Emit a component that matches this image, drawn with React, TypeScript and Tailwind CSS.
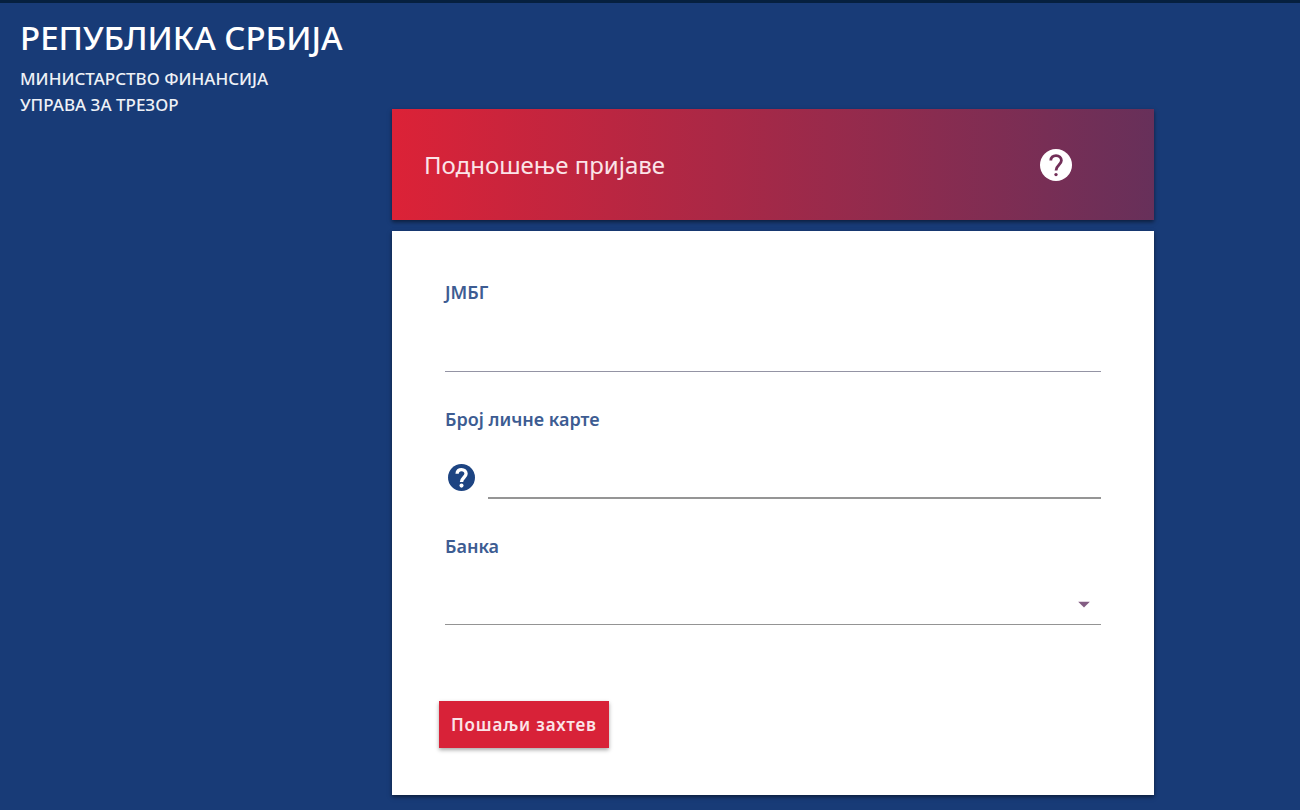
import type { ReactNode } from "react";
import { MdArrowDropDown } from "react-icons/md";

// Round help badge; the disc takes the text colour, the mark its own stroke.
function HelpIcon({ size, stroke, weight }: { size: number; stroke: string; weight: number }) {
  return (
    <svg width={size} height={size} viewBox="0 0 32 32" fill="none" aria-hidden="true">
      <circle cx="16" cy="16" r="16" fill="currentColor" />
      <path
        d="M10.8 11.5C10.8 8.3 13 6.6 16 6.6C19.2 6.6 21.4 8.6 21.4 11.6C21.4 15.8 16 16.4 16 21.4"
        stroke={stroke}
        strokeWidth={weight}
      />
      <circle cx="16" cy="25.6" r={weight * 0.6} fill={stroke} />
    </svg>
  );
}

function Field({ id, label, children }: { id: string; label: string; children: ReactNode }) {
  return (
    <div className="flex flex-col">
      <label htmlFor={id} className="text-lg leading-6 font-semibold text-[#3d5c92]">
        {label}
      </label>
      <div className="mt-8 flex items-end">{children}</div>
    </div>
  );
}

export default function App() {
  return (
    <div className="flex min-h-screen items-start border-t-3 border-[#06203f] bg-[#183b77] pb-[15px] font-['Noto_Sans','Open_Sans',sans-serif]">
      <header className="w-[392px] shrink-0 pt-[14px] pl-5 text-white">
        <h1 className="text-[33px] leading-[42px] font-medium">РЕПУБЛИКА СРБИЈА</h1>
        <p className="mt-[7px] text-[17px] leading-[26px] font-medium text-[#eef1f6]">
          МИНИСТАРСТВО ФИНАНСИЈА
          <br />
          УПРАВА ЗА ТРЕЗОР
        </p>
      </header>

      <main className="mt-[106px] mr-[146px] min-w-0 flex-1">
        <div className="flex h-[111px] items-center justify-between bg-linear-to-r/srgb from-[#dc2237] to-[#67305a] pr-[82px] pl-8 shadow-[0_2px_4px_rgba(0,0,0,0.5)]">
          <h2 className="text-2xl text-[#fbe4e8]">Подношење пријаве</h2>
          <button type="button" aria-label="Помоћ" className="text-white">
            <HelpIcon size={32} stroke="#722e58" weight={2.8} />
          </button>
        </div>

        <form
          className="mt-[11px] bg-white px-[53px] pt-[49px] pb-[47px] shadow-[0_2px_4px_rgba(0,0,0,0.5)]"
          onSubmit={(e) => e.preventDefault()}
        >
          <div className="flex flex-col gap-[35px]">
            <Field id="jmbg" label="ЈМБГ">
              <input
                id="jmbg"
                type="text"
                className="h-9 w-full border-b border-[#9494a4] text-lg outline-none"
              />
            </Field>
            <Field id="idCard" label="Број личне карте">
              <button type="button" aria-label="Помоћ за број личне карте" className="mr-[13px] mb-2 ml-[3px] text-[#1d4482]">
                <HelpIcon size={27} stroke="#ffffff" weight={4} />
              </button>
              <input
                id="idCard"
                type="text"
                className="h-9 min-w-0 flex-1 border-b-2 border-[#959595] text-lg outline-none"
              />
            </Field>
            <Field id="bank" label="Банка">
              <div className="relative w-full">
                <select
                  id="bank"
                  className="block h-[35px] w-full appearance-none border-b border-[#949494] text-lg outline-none"
                />
                <MdArrowDropDown size={28} className="pointer-events-none absolute top-0 right-[3px] text-[#835d83]" />
              </div>
            </Field>
          </div>
          <button
            type="submit"
            className="mt-[76px] -ml-[6px] block h-[47px] bg-[#d82238] px-3 text-[17px] font-semibold tracking-wider text-[#fbe4e8] shadow-[0_2px_4px_rgba(0,0,0,0.35)]"
          >
            Пошаљи захтев
          </button>
        </form>
      </main>
    </div>
  );
}
